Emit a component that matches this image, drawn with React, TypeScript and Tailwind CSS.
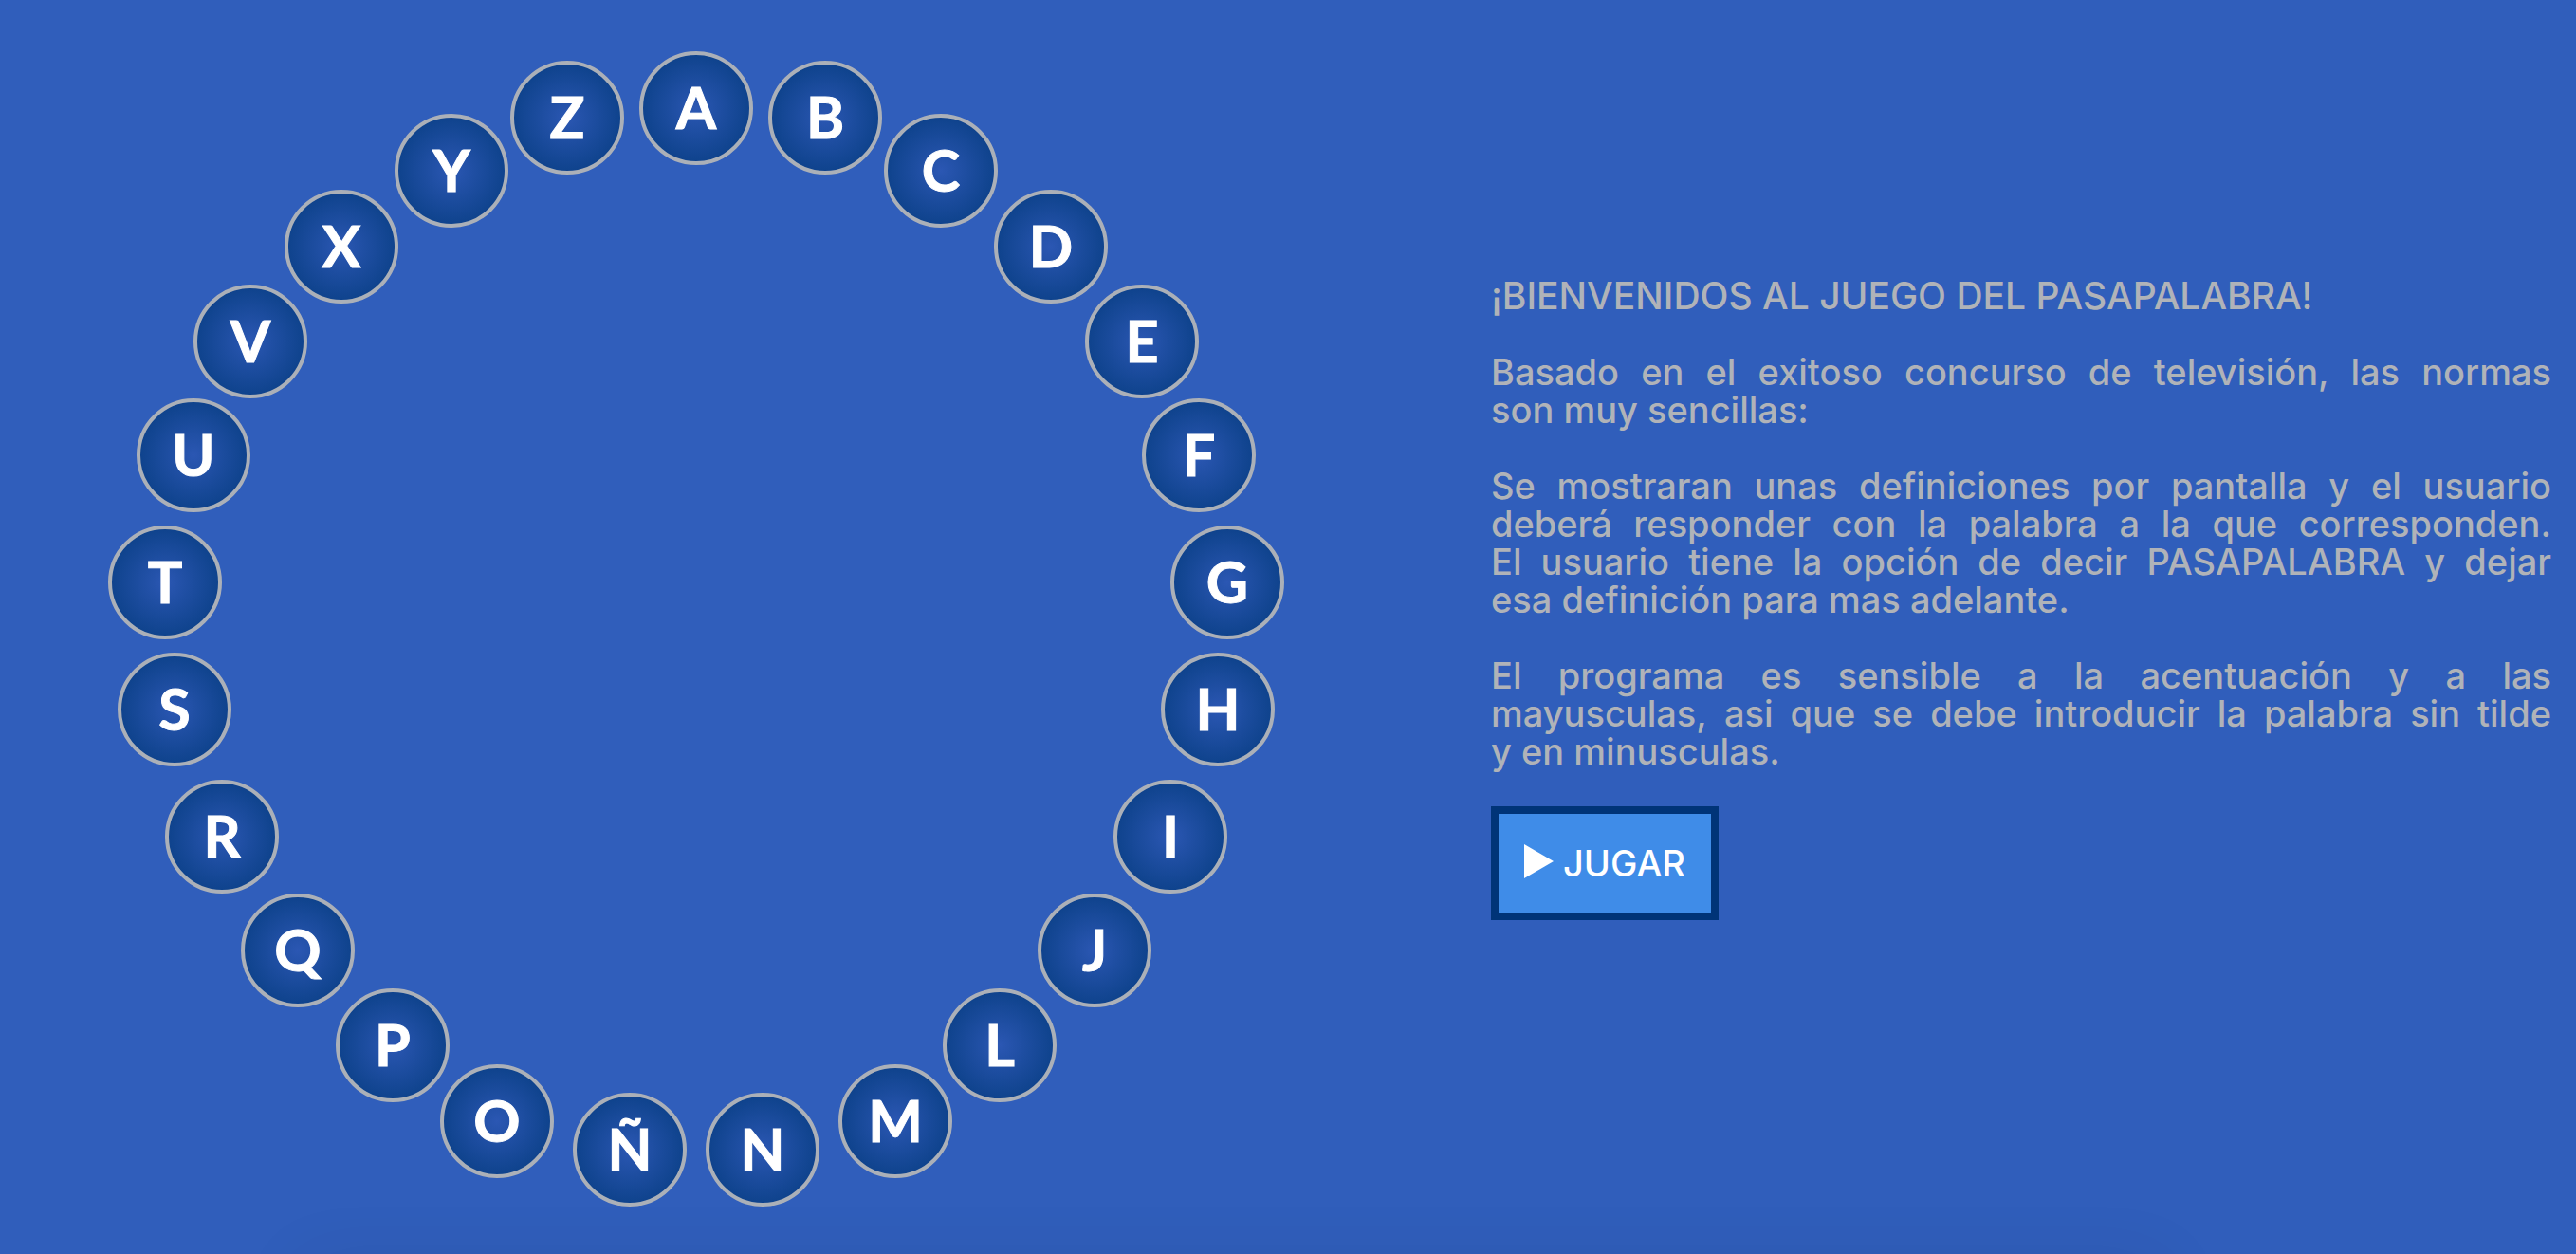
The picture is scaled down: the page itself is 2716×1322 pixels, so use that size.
type LetterSpot = { letter: string; x: number; y: number };

const WHEEL: LetterSpot[] = [
  { letter: "A", x: 560, y: 0 },
  { letter: "B", x: 696, y: 10 },
  { letter: "C", x: 818, y: 66 },
  { letter: "D", x: 934, y: 146 },
  { letter: "E", x: 1030, y: 246 },
  { letter: "F", x: 1090, y: 366 },
  { letter: "G", x: 1120, y: 500 },
  { letter: "H", x: 1110, y: 634 },
  { letter: "I", x: 1060, y: 768 },
  { letter: "J", x: 980, y: 888 },
  { letter: "L", x: 880, y: 988 },
  { letter: "M", x: 770, y: 1068 },
  { letter: "N", x: 630, y: 1098 },
  { letter: "Ñ", x: 490, y: 1098 },
  { letter: "O", x: 350, y: 1068 },
  { letter: "P", x: 240, y: 988 },
  { letter: "Q", x: 140, y: 888 },
  { letter: "R", x: 60, y: 768 },
  { letter: "S", x: 10, y: 634 },
  { letter: "T", x: 0, y: 500 },
  { letter: "U", x: 30, y: 366 },
  { letter: "V", x: 90, y: 246 },
  { letter: "X", x: 186, y: 146 },
  { letter: "Y", x: 302, y: 66 },
  { letter: "Z", x: 424, y: 10 },
];

function LetterWheel() {
  return (
    <ul className="relative h-[1218px] w-[1240px] shrink-0" aria-label="Rosco de letras">
      {WHEEL.map(({ letter, x, y }) => (
        <li
          key={letter}
          style={{ left: x, top: y }}
          className="absolute flex size-[120px] items-center justify-center rounded-full border-4 border-[#abb0b8] bg-[radial-gradient(circle_closest-side,#2b57b3,#0f438d)] pb-1 font-['Lato',sans-serif] text-[61px] leading-none font-bold text-white [-webkit-text-stroke:1px_white]"
        >
          {letter}
        </li>
      ))}
    </ul>
  );
}

function PlayButton() {
  return (
    <button
      type="button"
      className="mt-[38px] flex h-[120px] w-[240px] cursor-pointer items-center justify-center gap-2.5 border-8 border-[#003478] bg-[#3f8ce8] text-[38px] leading-10 font-medium text-white"
    >
      <svg viewBox="0 0 31 40" className="h-10 w-[31px]" fill="currentColor" aria-hidden="true">
        <path d="M0 0 31 18 0 36Z" />
      </svg>
      JUGAR
    </button>
  );
}

export default function App() {
  return (
    <main className="relative flex min-h-screen overflow-hidden bg-[#305ebb] pt-[54px] pr-[26px] pl-[114px] font-['Inter',sans-serif]">
      <LetterWheel />
      <section className="ml-[218px] min-w-0 flex-1 pt-[238px]">
        <div className="flex flex-col gap-10 text-justify text-[38px] leading-10 font-medium text-[#b0b3b8]">
          <h1 className="text-left text-[39px]">¡BIENVENIDOS AL JUEGO DEL PASAPALABRA!</h1>
          <p>Basado en el exitoso concurso de televisión, las normas son&nbsp;muy&nbsp;sencillas:</p>
          <p>
            Se mostraran unas definiciones por pantalla y el usuario deberá responder con la palabra a la que
            corresponden. El&nbsp;usuario tiene la opción de decir PASAPALABRA y dejar esa&nbsp;definición para mas
            adelante.
          </p>
          <p>
            El programa es sensible a la acentuación y a las mayusculas,&nbsp;asi que se debe introducir la palabra
            sin tilde y&nbsp;en&nbsp;minusculas.
          </p>
        </div>
        <PlayButton />
      </section>
      <div
        className="pointer-events-none absolute right-[436px] -bottom-[60px] left-[320px] h-10 shadow-[0_0_80px_rgba(0,0,0,0.12)]"
        aria-hidden="true"
      />
    </main>
  );
}
